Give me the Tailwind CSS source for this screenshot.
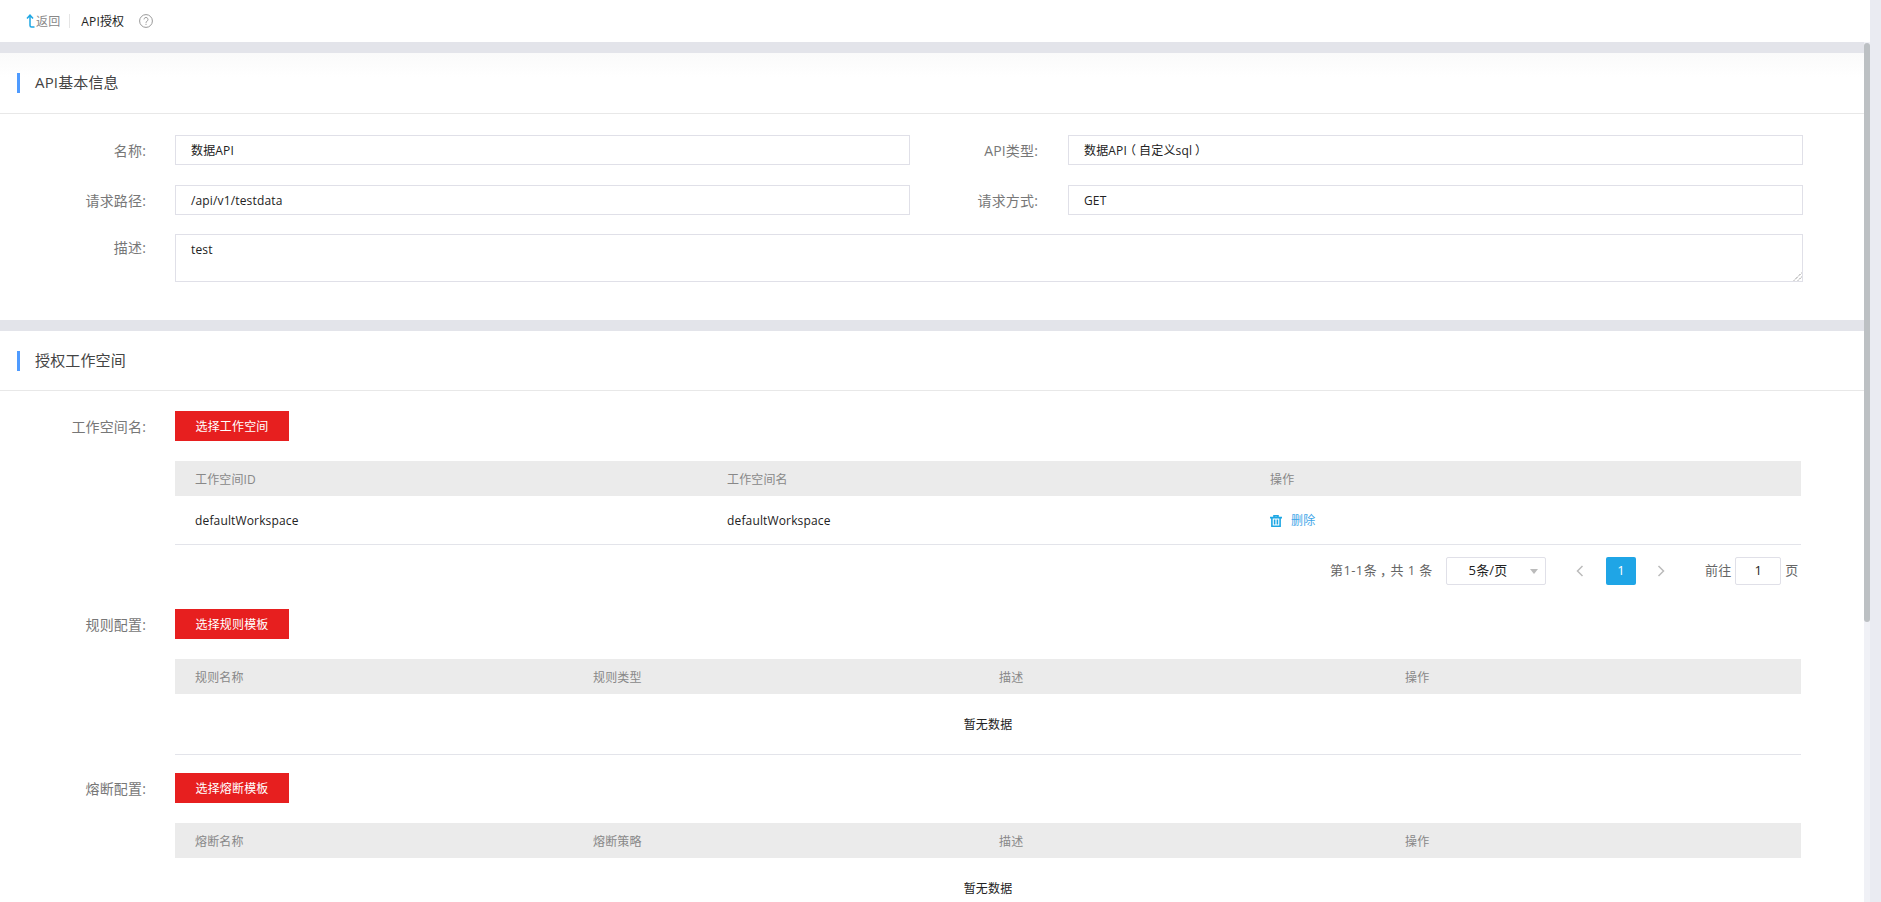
<!DOCTYPE html>
<html lang="zh-CN">
<head>
    <meta charset="UTF-8">
    <meta name="viewport" content="width=device-width, initial-scale=1.0">
    <title>API授权</title>
    <script src="https://cdn.jsdelivr.net/npm/@tailwindcss/browser@4"></script>
</head>
<body class="h-[902px] overflow-hidden bg-[#e3e4ea] font-['Open_Sans','Noto_Sans_CJK_SC',sans-serif] text-[12px] tracking-[0.15px] text-[#222]">
<div class="relative flex h-[902px]">
    <div class="w-[1870px] shrink-0 overflow-hidden">
        <!-- top bar -->
        <header class="flex h-[42px] items-center bg-white pl-[26px]">
            <a class="flex items-center text-[#888]">
                <svg class="h-[14px] w-[9px]" viewBox="0 0 9 14" fill="none" stroke="#1ea7e4" stroke-width="1.5"><path d="M1 4.5 4 1.2 7 4.5M4 1.5V11.5q0 1.5 1.5 1.5H8.5"/></svg>
                <span class="ml-px pt-[2px]">返回</span>
            </a>
            <span class="ml-[9px] mr-[11px] h-[14px] w-px bg-[#e5e5e5]"></span>
            <span class="pt-[2px] text-[#222]">API授权</span>
            <svg class="ml-[15px] h-[14px] w-[14px]" viewBox="0 0 14 14" fill="none" stroke="#999" stroke-width="1"><circle cx="7" cy="7" r="6.4"/><path d="M5 5.4a2 2 0 1 1 3 1.8c-.7.4-1 .8-1 1.6M7 9.8v1.1"/></svg>
        </header>

        <div class="h-[11px] bg-[#e3e4ea]"></div>

        <!-- basic info -->
        <section class="mr-[6px] h-[267px] rounded-tr-[4px] bg-white">
            <div class="flex h-[61px] items-center border-b border-[#e8e8e8] bg-gradient-to-b from-[#fafafa] to-white to-40%">
                <span class="ml-[17px] h-[20px] w-[3px] bg-[#4f9bff]"></span>
                <h2 class="ml-[15px] pb-[2px] text-[15px] font-normal text-[#444]">API基本信息</h2>
            </div>
            <div class="pt-[21px]">
                <div class="flex h-[30px] items-center">
                    <label class="w-[146px] text-right text-[14px] text-[#777]">名称:</label>
                    <div class="ml-[29px] flex h-[30px] w-[735px] items-center border border-[#e0e0e8] pl-[15px] pt-[2px] leading-none">数据API</div>
                    <label class="w-[128px] text-right text-[14px] text-[#777]">API类型:</label>
                    <div class="ml-[30px] flex h-[30px] w-[735px] items-center whitespace-pre border border-[#e0e0e8] pl-[15px] pt-[2px] leading-none">数据API<span class="relative -left-[3px]">（</span>自定义sql<span class="relative left-[3px]">）</span></div>
                </div>
                <div class="mt-[20px] flex h-[30px] items-center">
                    <label class="w-[146px] text-right text-[14px] text-[#777]">请求路径:</label>
                    <div class="ml-[29px] flex h-[30px] w-[735px] items-center border border-[#e0e0e8] pl-[15px] pt-[2px] leading-none">/api/v1/testdata</div>
                    <label class="w-[128px] text-right text-[14px] text-[#777]">请求方式:</label>
                    <div class="ml-[30px] flex h-[30px] w-[735px] items-center border border-[#e0e0e8] pl-[15px] pt-[2px] leading-none">GET</div>
                </div>
                <div class="mt-[19px] flex">
                    <label class="w-[146px] pt-[3px] text-right text-[14px] text-[#777]">描述:</label>
                    <div class="relative ml-[29px] h-[48px] w-[1628px] border border-[#e0e0e8] pl-[15px] pt-[6px]">
                        test
                        <svg class="absolute bottom-0 right-0 h-[9px] w-[9px]" viewBox="0 0 9 9" stroke="#666" stroke-width="1" stroke-dasharray="1 1"><path d="M1 8.5 8.5 1M5 8.5 8.5 5"/></svg>
                    </div>
                </div>
            </div>
        </section>

        <div class="h-[11px] bg-[#e3e4ea]"></div>

        <!-- authorized workspaces -->
        <section class="mr-[6px] h-[571px] bg-white">
            <div class="flex h-[60px] items-center border-b border-[#e8e8e8]">
                <span class="ml-[17px] h-[20px] w-[3px] bg-[#4f9bff]"></span>
                <h2 class="ml-[15px] text-[15px] font-normal text-[#444]">授权工作空间</h2>
            </div>

            <div class="mt-[20px] flex h-[30px] items-center">
                <label class="w-[146px] text-right text-[14px] text-[#777]">工作空间名:</label>
                <button class="ml-[29px] h-[30px] w-[114px] bg-[#e71f1f] pt-[2px] text-white">选择工作空间</button>
            </div>
            <div class="ml-[175px] mt-[20px] w-[1626px]">
                <div class="grid h-[35px] grid-cols-[532px_543px_1fr] items-center bg-[#ebebeb] pt-[2px] text-[#888]">
                    <span class="pl-[20px]">工作空间ID</span>
                    <span class="pl-[20px]">工作空间名</span>
                    <span class="pl-[20px]">操作</span>
                </div>
                <div class="grid h-[49px] grid-cols-[532px_543px_1fr] items-center border-b border-[#e3e4ea] pt-[2px]">
                    <span class="pl-[20px]">defaultWorkspace</span>
                    <span class="pl-[20px]">defaultWorkspace</span>
                    <span class="flex items-center pl-[20px] text-[#3da5e8]">
                        <svg class="h-[12px] w-[12px]" viewBox="0 0 12 12" fill="none" stroke="#1ea7e4" stroke-width="1.6"><path d="M0 2.6h12M4 2.6V.8h4v1.8M1.9 2.6v8.6h8.2V2.6M4.6 4.6v5M7.4 4.6v5"/></svg>
                        <span class="ml-[9px]">删除</span>
                    </span>
                </div>
                <div class="mt-[12px] flex h-[28px] items-center text-[13px] text-[#666]">
                    <span class="ml-[1155px] w-[116px] whitespace-nowrap tracking-[0.4px]">第1-1条<span class="relative left-[3px]">，</span>共 1 条</span>
                    <div class="relative flex h-[28px] w-[100px] items-center justify-center rounded-[2px] border border-[#e0e0e8] text-[#222]">
                        <span class="-ml-[16px]">5条/页</span>
                        <span class="absolute right-[7px] top-[11px] h-0 w-0 border-x-[4px] border-t-[5px] border-x-transparent border-t-[#bbb]"></span>
                    </div>
                    <svg class="ml-[30px] h-[12px] w-[8px]" viewBox="0 0 8 12" fill="none" stroke="#bbb" stroke-width="1.5"><path d="M6.5 1 1.5 6l5 5"/></svg>
                    <span class="ml-[22px] flex h-[28px] w-[30px] items-center justify-center rounded-[2px] bg-[#1fa5e6] text-white">1</span>
                    <svg class="ml-[21px] h-[12px] w-[8px]" viewBox="0 0 8 12" fill="none" stroke="#bbb" stroke-width="1.5"><path d="M1.5 1 6.5 6l-5 5"/></svg>
                    <span class="ml-[40px]">前往</span>
                    <span class="ml-[4px] flex h-[28px] w-[46px] items-center justify-center rounded-[2px] border border-[#e0e0e8] text-[#222]">1</span>
                    <span class="ml-[4px]">页</span>
                </div>
            </div>

            <div class="mt-[24px] flex h-[30px] items-center">
                <label class="w-[146px] text-right text-[14px] text-[#777]">规则配置:</label>
                <button class="ml-[29px] h-[30px] w-[114px] bg-[#e71f1f] pt-[2px] text-white">选择规则模板</button>
            </div>
            <div class="ml-[175px] mt-[20px] w-[1626px]">
                <div class="grid h-[35px] grid-cols-[398px_406px_406px_1fr] items-center bg-[#ebebeb] pt-[2px] text-[#888]">
                    <span class="pl-[20px]">规则名称</span>
                    <span class="pl-[20px]">规则类型</span>
                    <span class="pl-[20px]">描述</span>
                    <span class="pl-[20px]">操作</span>
                </div>
                <div class="flex h-[61px] items-center justify-center border-b border-[#e3e4ea] pt-[2px]">暂无数据</div>
            </div>

            <div class="mt-[18px] flex h-[30px] items-center">
                <label class="w-[146px] text-right text-[14px] text-[#777]">熔断配置:</label>
                <button class="ml-[29px] h-[30px] w-[114px] bg-[#e71f1f] pt-[2px] text-white">选择熔断模板</button>
            </div>
            <div class="ml-[175px] mt-[20px] w-[1626px]">
                <div class="grid h-[35px] grid-cols-[398px_406px_406px_1fr] items-center bg-[#ebebeb] pt-[2px] text-[#888]">
                    <span class="pl-[20px]">熔断名称</span>
                    <span class="pl-[20px]">熔断策略</span>
                    <span class="pl-[20px]">描述</span>
                    <span class="pl-[20px]">操作</span>
                </div>
                <div class="flex h-[60px] items-center justify-center border-b border-[#e3e4ea] pt-[2px]">暂无数据</div>
            </div>
        </section>
    </div>

    <!-- scrollbar -->
    <div class="w-[11px] bg-[#eaebf2]"></div>
    <div class="absolute bottom-0 left-[1864px] top-[42px] w-[6px] bg-[#f0f1f6]">
        <div class="mt-px h-[579px] w-[6px] rounded-[3px] bg-[#bcc0c3]"></div>
    </div>
</div>
</body>
</html>
